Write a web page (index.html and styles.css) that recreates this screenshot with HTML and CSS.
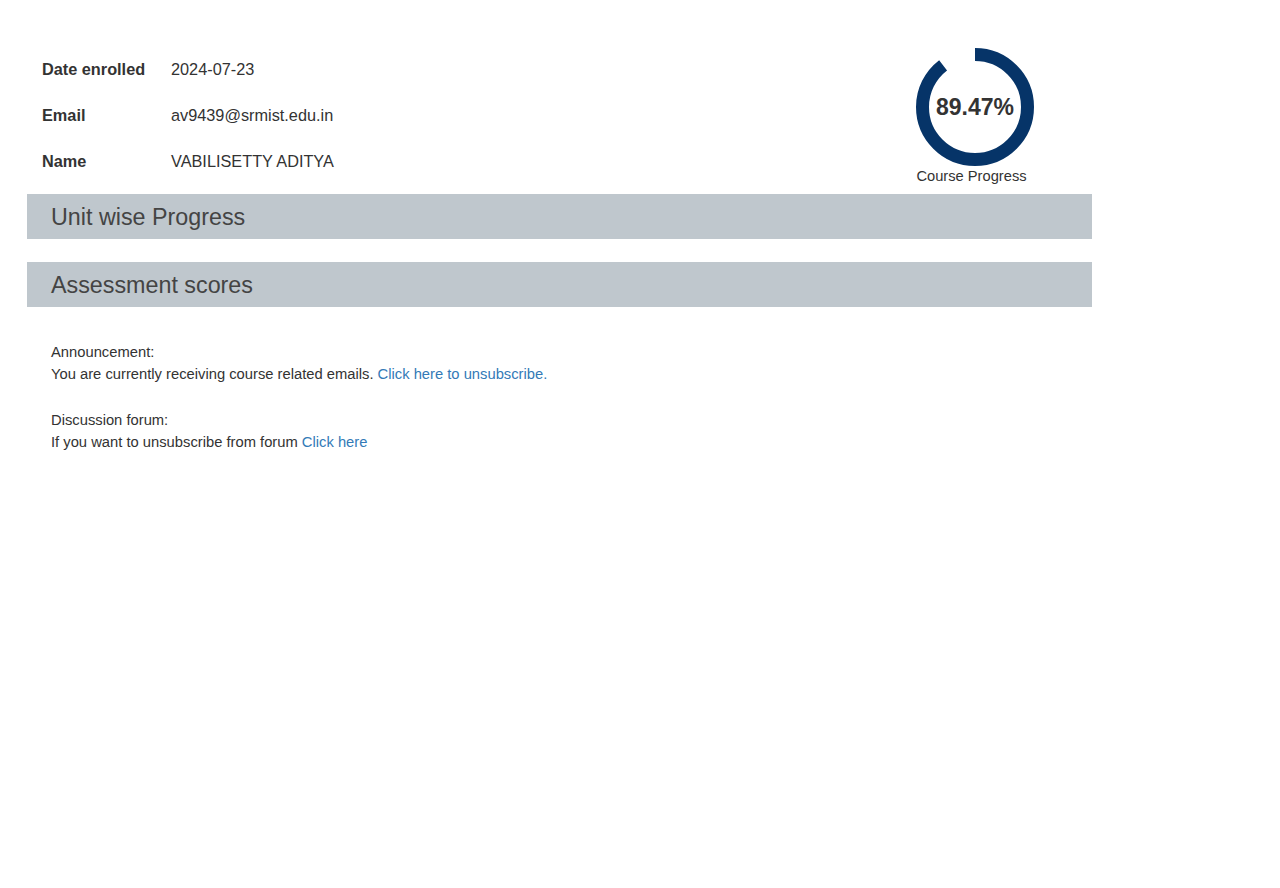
FILE: index.html
```html
<!DOCTYPE html>
<html>
<head>
<meta charset="utf-8">
<link rel="stylesheet" href="styles.css">
</head>
<body>
<div class="page">
  <div class="top">
    <div class="info">
      <div class="label">Date enrolled</div><div class="value">2024-07-23</div>
      <div class="label">Email</div><div class="value">av9439@srmist.edu.in</div>
      <div class="label">Name</div><div class="value">VABILISETTY ADITYA</div>
    </div>
    <div class="progress">
      <div class="donut">
        <svg width="120" height="120" viewBox="0 0 120 120">
          <circle cx="60" cy="60" r="52.5" fill="none" stroke="#063468" stroke-width="13"
            stroke-dasharray="295.1 400" transform="rotate(-90 60 60)"/>
        </svg>
        <div class="pct">89.47%</div>
      </div>
      <div class="plabel">Course Progress</div>
    </div>
  </div>
  <div class="bar">Unit wise Progress</div>
  <div class="bar">Assessment scores</div>
  <div class="notes">
    <p>Announcement:<br>You are currently receiving course related emails. <a href="#">Click here to unsubscribe.</a></p>
    <p>Discussion forum:<br>If you want to unsubscribe from forum <a href="#">Click here</a></p>
  </div>
</div>
</body>
</html>
```

FILE: styles.css
```css
body {
  margin: 0;
  background: #fff;
  font-family: "Liberation Sans", Arial, sans-serif;
  color: #333;
}
.page {
  width: 1065px;
  margin-left: 27px;
  padding-top: 46px;
}
.top {
  display: flex;
  justify-content: space-between;
  align-items: flex-start;
  margin-bottom: 9px;
}
.info {
  display: grid;
  grid-template-columns: 129px auto;
  grid-auto-rows: 46px;
  align-items: center;
  padding-left: 15px;
  font-size: 16.3px;
}
.label {
  font-weight: bold;
}
.progress {
  display: flex;
  flex-direction: column;
  align-items: center;
  margin-right: 57px;
  margin-top: 1px;
}
.donut {
  position: relative;
  width: 120px;
  height: 120px;
}
.donut svg {
  display: block;
}
.pct {
  position: absolute;
  inset: 0;
  display: flex;
  align-items: center;
  justify-content: center;
  font-size: 23px;
  font-weight: bold;
  color: #333;
}
.plabel {
  font-size: 14.7px;
  line-height: 18px;
  color: #333;
  margin-right: 7px;
}
.bar {
  background: #bfc7cd;
  height: 45px;
  line-height: 46px;
  padding-left: 24px;
  font-size: 23.3px;
  color: #444;
  margin-bottom: 23px;
}
.notes {
  padding-left: 24px;
  padding-top: 11px;
  font-size: 14.75px;
  line-height: 22px;
}
.notes p {
  margin: 0 0 24px;
}
.notes a {
  color: #337ab7;
  text-decoration: none;
}
```
